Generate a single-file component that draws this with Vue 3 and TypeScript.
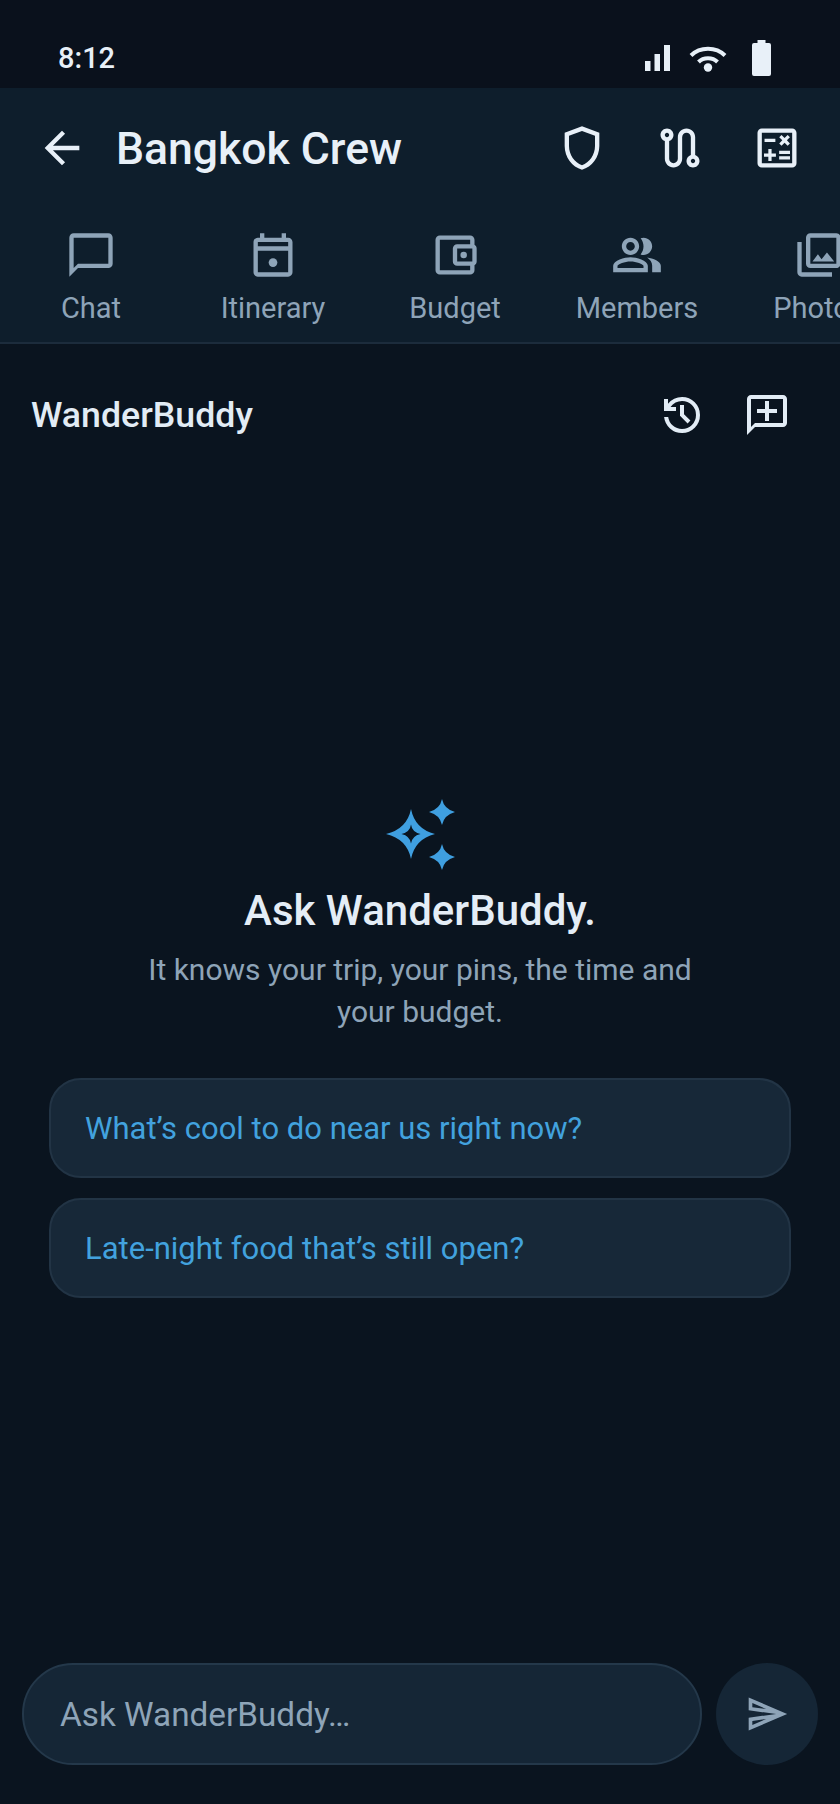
<script setup lang="ts">
const tabs = [
  {
    label: 'Chat',
    paths: ['M20 2H4c-1.1 0-2 .9-2 2v18l4-4h14c1.1 0 2-.9 2-2V4c0-1.1-.9-2-2-2zm0 14H6l-2 2V4h16v12z'],
  },
  {
    label: 'Itinerary',
    paths: [
      'M19 4h-1V2h-2v2H8V2H6v2H5c-1.1 0-2 .9-2 2v14c0 1.1.9 2 2 2h14c1.1 0 2-.9 2-2V6c0-1.1-.9-2-2-2zm0 16H5V10h14v10zm0-12H5V6h14v2z',
      'M14 15.5a2 2 0 1 1-4 0 2 2 0 0 1 4 0z',
    ],
  },
  {
    label: 'Budget',
    paths: [
      'M21 7.28V5c0-1.1-.9-2-2-2H5c-1.11 0-2 .9-2 2v14c0 1.1.89 2 2 2h14c1.1 0 2-.9 2-2v-2.28c.59-.35 1-.98 1-1.72V9c0-.74-.41-1.37-1-1.72zM20 9v6h-7V9h7zM5 19V5h14v2h-6c-1.1 0-2 .9-2 2v6c0 1.1.9 2 2 2h6v2H5z',
      'M17.5 12a1.5 1.5 0 1 1-3 0 1.5 1.5 0 0 1 3 0z',
    ],
  },
  {
    label: 'Members',
    paths: [
      'M16.67 13.13C18.04 14.06 19 15.32 19 17v3h4v-3c0-2.18-3.57-3.47-6.33-3.87z',
      'M15 12c2.21 0 4-1.79 4-4s-1.79-4-4-4c-.47 0-.91.1-1.33.24C14.5 5.27 15 6.58 15 8s-.5 2.73-1.33 3.76c.42.14.86.24 1.33.24z',
      'M9 12c2.21 0 4-1.79 4-4s-1.79-4-4-4-4 1.79-4 4 1.79 4 4 4zm0-6c1.1 0 2 .9 2 2s-.9 2-2 2-2-.9-2-2 .9-2 2-2z',
      'M9 13c-2.67 0-8 1.34-8 4v3h16v-3c0-2.66-5.33-4-8-4zm6 5H3v-.99C3.2 16.29 6.3 15 9 15s5.8 1.29 6 2z',
    ],
  },
  {
    label: 'Photos',
    paths: [
      'M20 4v12H8V4h12m0-2H8c-1.1 0-2 .9-2 2v12c0 1.1.9 2 2 2h12c1.1 0 2-.9 2-2V4c0-1.1-.9-2-2-2zm-8.5 9.67 1.69 2.26 2.48-3.1L19 15H9zM2 6v14c0 1.1.9 2 2 2h14v-2H4V6H2z',
    ],
  },
]

const headerActions = [
  ['M12 2 4 5v6.09c0 5.05 3.41 9.76 8 10.91 4.59-1.15 8-5.86 8-10.91V5l-8-3zm6 9.09c0 4-2.55 7.7-6 8.83-3.45-1.13-6-4.82-6-8.83v-4.7l6-2.25 6 2.25v4.7z'],
  ['M19 15.18V7c0-2.21-1.79-4-4-4s-4 1.79-4 4v10c0 1.1-.9 2-2 2s-2-.9-2-2V8.82C8.16 8.4 9 7.3 9 6c0-1.66-1.34-3-3-3S3 4.34 3 6c0 1.3.84 2.4 2 2.82V17c0 2.21 1.79 4 4 4s4-1.79 4-4V7c0-1.1.9-2 2-2s2 .9 2 2v8.18c-1.16.41-2 1.51-2 2.82 0 1.66 1.34 3 3 3s3-1.34 3-3c0-1.3-.84-2.4-2-2.82zM6 7c-.55 0-1-.45-1-1s.45-1 1-1 1 .45 1 1-.45 1-1 1zm12 12c-.55 0-1-.45-1-1s.45-1 1-1 1 .45 1 1-.45 1-1 1z'],
  [
    'M19 3H5c-1.1 0-2 .9-2 2v14c0 1.1.9 2 2 2h14c1.1 0 2-.9 2-2V5c0-1.1-.9-2-2-2zm0 16H5V5h14v14z',
    'M6.25 7.72h5v1.5h-5zM13 15.75h5v1.5h-5zm0-2.5h5v1.5h-5zM8 18h1.5v-2h2v-1.5h-2v-2H8v2H6V16h2zm6.09-7.05 1.41-1.41 1.41 1.41 1.06-1.06-1.41-1.42 1.41-1.41L16.91 6 15.5 7.41 14.09 6l-1.06 1.06 1.41 1.41-1.41 1.42z',
  ],
]

const suggestions = ['What’s cool to do near us right now?', 'Late-night food that’s still open?']
</script>

<template>
  <div class="screen">
    <div class="status">
      <span class="status__time">8:12</span>
      <div class="status__icons">
        <svg width="25" height="26" viewBox="0 0 25 26">
          <rect x="0" y="16" width="5.5" height="10" />
          <rect x="9.5" y="9" width="5.5" height="17" />
          <rect x="19" y="0" width="6" height="26" />
        </svg>
        <svg class="status__wifi" width="38" height="28" viewBox="0 0 38 28">
          <path class="wifi" d="M2 11.5C11 2.5 27 2.5 36 11.5" />
          <path class="wifi" d="M9.5 18C14.5 13 23.5 13 28.5 18" />
          <circle cx="19" cy="23.5" r="4.2" fill="currentColor" stroke="none" />
        </svg>
        <svg width="19" height="36" viewBox="0 0 19 36">
          <path d="M5.5 0h8v3h3.5a2 2 0 0 1 2 2v29a2 2 0 0 1-2 2H2a2 2 0 0 1-2-2V5a2 2 0 0 1 2-2h3.5z" />
        </svg>
      </div>
    </div>

    <header class="top">
      <div class="top__bar">
        <svg width="52" height="52" viewBox="0 0 24 24">
          <path d="M20 11H7.83l5.59-5.59L12 4l-8 8 8 8 1.41-1.41L7.83 13H20v-2z" />
        </svg>
        <h1 class="top__title">Bangkok Crew</h1>
        <div class="top__actions">
          <svg v-for="(icon, i) in headerActions" :key="i" width="52" height="52" viewBox="0 0 24 24">
            <path v-for="d in icon" :key="d" :d="d" />
          </svg>
        </div>
      </div>
      <nav class="tabs">
        <div v-for="tab in tabs" :key="tab.label" class="tab">
          <svg width="52" height="52" viewBox="0 0 24 24">
            <path v-for="d in tab.paths" :key="d" :d="d" />
          </svg>
          <span>{{ tab.label }}</span>
        </div>
      </nav>
    </header>

    <div class="sub">
      <span class="sub__title">WanderBuddy</span>
      <div class="sub__actions">
        <svg width="48" height="48" viewBox="0 0 24 24">
          <path d="M12 21q-3.45 0-6.012-2.287T3.05 13H5.1q.35 2.6 2.313 4.3T12 19q2.925 0 4.963-2.037T19 12q0-2.925-2.037-4.962T12 5q-1.725 0-3.225.8T6.25 8H9v2H3V4h2v2.35q1.275-1.6 3.113-2.475T12 3q3.75 0 6.375 2.625T21 12q0 3.75-2.625 6.375T12 21Zm2.8-4.8L11 12.4V7h2v4.6l3.2 3.2-1.4 1.4Z" />
        </svg>
        <svg width="48" height="48" viewBox="0 0 24 24">
          <path d="M20 2H4c-1.1 0-2 .9-2 2v18l4-4h14c1.1 0 2-.9 2-2V4c0-1.1-.9-2-2-2zm0 14H6l-2 2V4h16v12z" />
          <path d="M13 5h-2v4H7v2h4v4h2v-4h4V9h-4z" />
        </svg>
      </div>
    </div>

    <main class="empty">
      <svg class="empty__icon" width="72" height="72" viewBox="0 0 72 72">
        <path fill-rule="evenodd" d="M27 9Q31 29 51 34 31 39 27 59 23 39 2 34 23 29 27 9ZM27 24.5Q28 32 36.5 34 28 36 27 43.5 26 36 17.5 34 26 32 27 24.5Z" />
        <path d="M58 -1Q60 9 71 12 60 15 58 25 56 15 45 12 56 9 58 -1Z" />
        <path d="M58 44Q60 54 71 57 60 60 58 70 56 60 45 57 56 54 58 44Z" />
      </svg>
      <h2 class="empty__title">Ask WanderBuddy.</h2>
      <p class="empty__text">It knows your trip, your pins, the time and your budget.</p>
      <div class="chips">
        <button v-for="s in suggestions" :key="s" class="chip">{{ s }}</button>
      </div>
    </main>

    <footer class="composer">
      <div class="composer__input">Ask WanderBuddy…</div>
      <div class="composer__send">
        <svg width="44" height="44" viewBox="0 0 24 24">
          <path d="M4.01 6.03l7.51 3.22-7.52-1 .01-2.22m7.5 8.72L4 17.97v-2.22l7.51-1M2.01 3L2 10l15 2-15 2 .01 7L23 12 2.01 3z" />
        </svg>
      </div>
    </footer>
  </div>
</template>

<style scoped>
.screen {
  width: 840px;
  height: 1804px;
  display: flex;
  flex-direction: column;
  overflow: hidden;
  background: #0a141f;
  font-family: Roboto, "Liberation Sans", sans-serif;
}
svg {
  display: block;
  flex: none;
  fill: currentColor;
  overflow: visible;
}
.status {
  height: 88px;
  flex: none;
  display: flex;
  align-items: center;
  justify-content: space-between;
  padding: 28px 69px 0 58px;
  box-sizing: border-box;
  background: #0a111c;
  color: #e8f0f8;
}
.status__time {
  font-size: 29px;
  font-weight: 500;
}
.status__icons {
  display: flex;
  align-items: center;
  gap: 25px;
}
.status__wifi {
  margin-left: -6px;
}
.wifi {
  fill: none;
  stroke: currentColor;
  stroke-width: 4;
}
.top {
  flex: none;
  height: 256px;
  display: flex;
  flex-direction: column;
  background: #0e1e2c;
  border-bottom: 2px solid #1c2c3c;
  box-sizing: border-box;
}
.top__bar {
  height: 120px;
  flex: none;
  display: flex;
  align-items: center;
  padding: 0 37px 0 36px;
  color: #e8f0f8;
}
.top__title {
  margin: 2px 0 0 28px;
  font-size: 44.5px;
  font-weight: 500;
}
.top__actions {
  margin-left: auto;
  display: flex;
  gap: 45.5px;
}
.tabs {
  display: flex;
  overflow: hidden;
  color: #8ea4b8;
}
.tab {
  flex: 0 0 182px;
  display: flex;
  flex-direction: column;
  align-items: center;
  gap: 10px;
  padding-top: 21px;
  font-size: 29px;
}
.sub {
  height: 140px;
  flex: none;
  display: flex;
  align-items: center;
  justify-content: space-between;
  padding: 2px 49px 0 31px;
  box-sizing: border-box;
  color: #e2ecf5;
}
.sub__title {
  font-size: 35.7px;
  font-weight: 500;
}
.sub__actions {
  display: flex;
  align-items: center;
  gap: 37px;
}
.empty {
  flex: 1;
  display: flex;
  flex-direction: column;
  align-items: center;
  padding: 316px 49px 0;
}
.empty__icon {
  color: #3f9fe0;
}
.empty__title {
  margin: 14px 0 0;
  font-size: 42px;
  font-weight: 500;
  color: #e4edf6;
}
.empty__text {
  margin: 14px 0 0;
  width: 600px;
  text-align: center;
  font-size: 30px;
  line-height: 42px;
  color: #8ea4b8;
}
.chips {
  width: 100%;
  margin-top: 45px;
  display: flex;
  flex-direction: column;
  gap: 20px;
}
.chip {
  height: 100px;
  padding: 0 34px;
  text-align: left;
  font: inherit;
  font-size: 31px;
  color: #42a2de;
  background: #172838;
  border: 2px solid #223445;
  border-radius: 32px;
}
.composer {
  flex: none;
  display: flex;
  gap: 14px;
  padding: 0 22px 39px;
}
.composer__input {
  flex: 1;
  height: 102px;
  box-sizing: border-box;
  display: flex;
  align-items: center;
  padding: 0 36px;
  font-size: 33.3px;
  color: #8ea4b8;
  background: #152636;
  border: 2px solid #24384a;
  border-radius: 51px;
}
.composer__send {
  width: 102px;
  height: 102px;
  display: flex;
  align-items: center;
  justify-content: center;
  border-radius: 50%;
  background: #152636;
  color: #8ea4b8;
}
</style>
